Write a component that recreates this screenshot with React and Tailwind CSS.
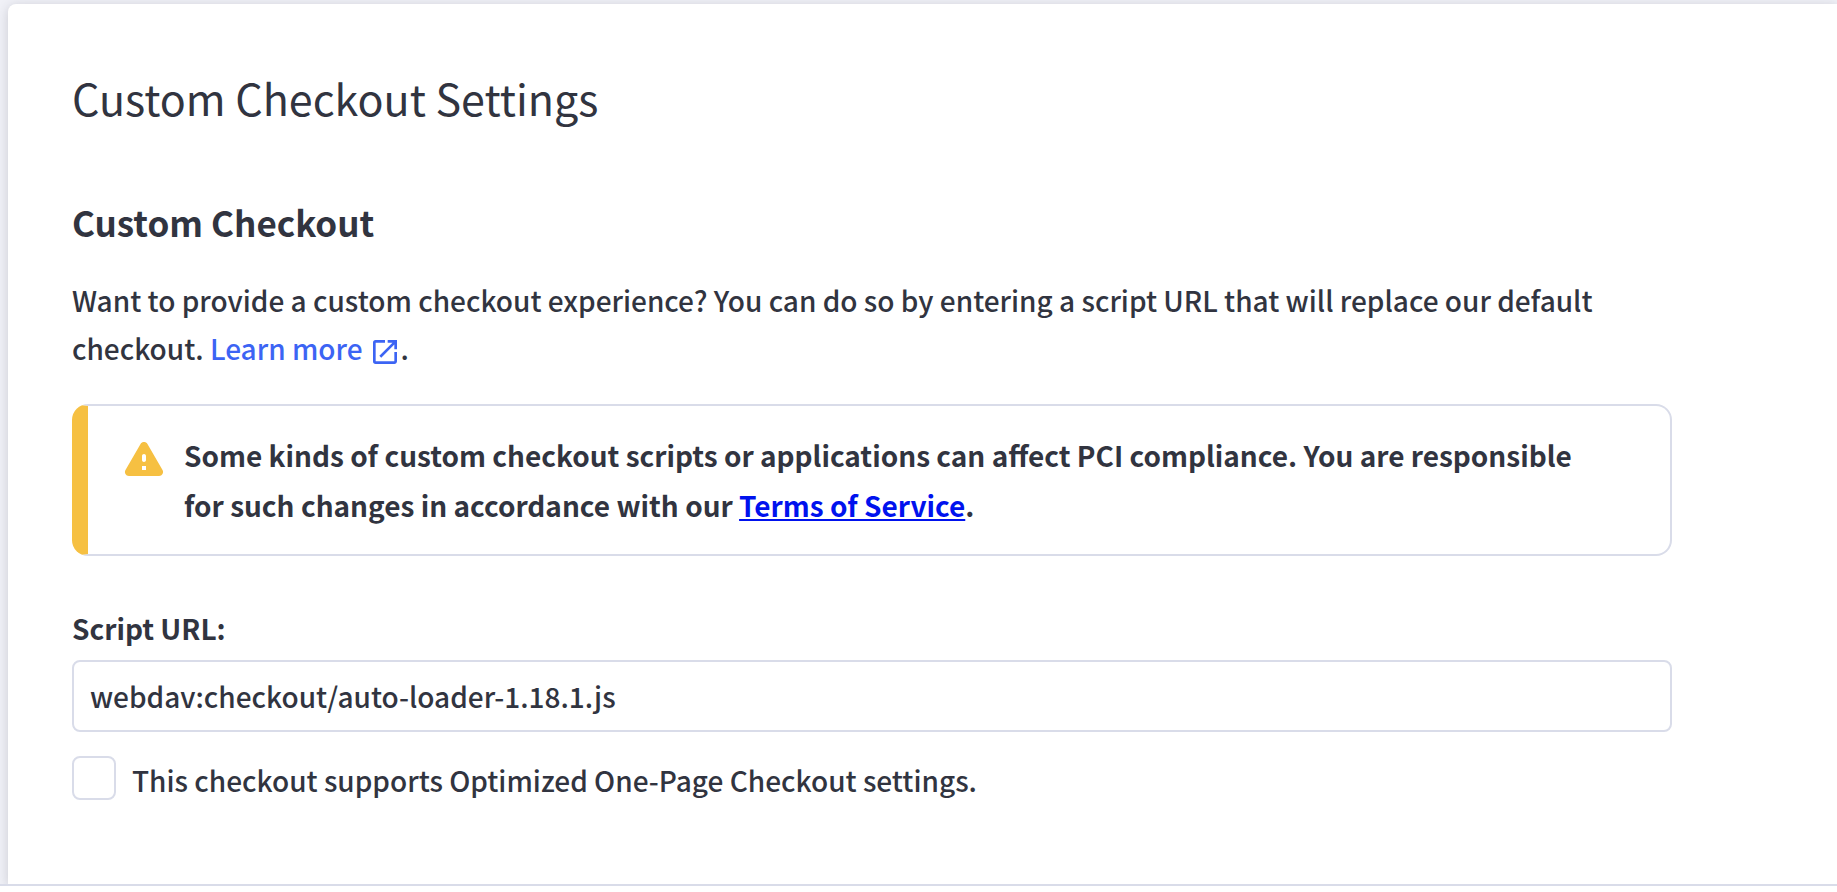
import { useState } from "react";

function ExternalLinkIcon() {
  return (
    <svg
      viewBox="0 0 24 24"
      aria-hidden="true"
      className="ml-1.5 inline-block size-8 align-[-8px]"
      fill="currentColor"
    >
      <path d="M19 19H5V5h7V3H5a2 2 0 0 0-2 2v14a2 2 0 0 0 2 2h14c1.1 0 2-.9 2-2v-7h-2v7zM14 3v2h3.59l-9.83 9.83 1.41 1.41L19 6.41V10h2V3h-7z" />
    </svg>
  );
}

function WarningIcon() {
  return (
    <svg viewBox="0 0 24 24" aria-hidden="true" className="mt-1 size-12 shrink-0 text-[#f6c042]" fill="currentColor">
      <path
        fillRule="evenodd"
        d="M4.47 21h15.06c1.54 0 2.5-1.67 1.73-3L13.73 4.99c-.77-1.33-2.69-1.33-3.46 0L2.74 18c-.77 1.33.19 3 1.73 3zM12 14c-.55 0-1-.45-1-1v-2c0-.55.45-1 1-1s1 .45 1 1v2c0 .55-.45 1-1 1zm1 4h-2v-2h2v2z"
      />
    </svg>
  );
}

export default function App() {
  const [url, setUrl] = useState("webdav:checkout/auto-loader-1.18.1.js");
  const [optimized, setOptimized] = useState(false);

  return (
    <div className="min-h-screen bg-white font-['Noto_Sans_CJK_SC',sans-serif] text-[28px] leading-[48px] font-medium text-[#313440]">
      <div className="overflow-hidden border-b-2 border-[#d9dce9] bg-[#f0f1f7] pt-1 pl-2">
        <main className="rounded-tl-lg bg-white px-16 pt-16 pb-20 shadow-[0_2px_12px_rgba(49,52,64,0.2)]">
          <h1 className="text-[43px] leading-[58px] font-normal">Custom Checkout Settings</h1>
          <section className="mt-[66px] max-w-[1600px]">
            <h2 className="text-[35px] leading-[60px] font-bold">Custom Checkout</h2>
            <p className="mt-6">
              Want to provide a custom checkout experience? You can do so by entering a script URL that will replace our
              default checkout.{" "}
              <a href="#learn-more" className="text-[#3c64f4]">
                Learn more
                <ExternalLinkIcon />
              </a>
              .
            </p>
            <div className="mt-8 flex items-start gap-4 rounded-2xl border-2 border-l-16 border-[#d9dce9] border-l-[#f6c042] py-6 pr-16 pl-8">
              <WarningIcon />
              <p className="leading-[50px] font-bold">
                Some kinds of custom checkout scripts or applications can affect PCI compliance. You are responsible for
                such changes in accordance with our{" "}
                <a href="#terms" className="text-[#0012ee] underline">
                  Terms of Service
                </a>
                .
              </p>
            </div>
            <label htmlFor="script-url" className="mt-12 block font-bold">
              Script URL:
            </label>
            <input
              id="script-url"
              type="text"
              value={url}
              onChange={(e) => setUrl(e.target.value)}
              className="mt-2 block h-[72px] w-full rounded-lg border-2 border-[#d9dce9] bg-white px-4 outline-none"
            />
            <div className="mt-6 flex items-start gap-4">
              <input
                id="optimized"
                type="checkbox"
                checked={optimized}
                onChange={(e) => setOptimized(e.target.checked)}
                className="size-11 shrink-0 appearance-none rounded-lg border-2 border-[#d9dce9] bg-white checked:bg-[#3c64f4]"
              />
              <label htmlFor="optimized">This checkout supports Optimized One-Page Checkout settings.</label>
            </div>
          </section>
        </main>
      </div>
    </div>
  );
}
